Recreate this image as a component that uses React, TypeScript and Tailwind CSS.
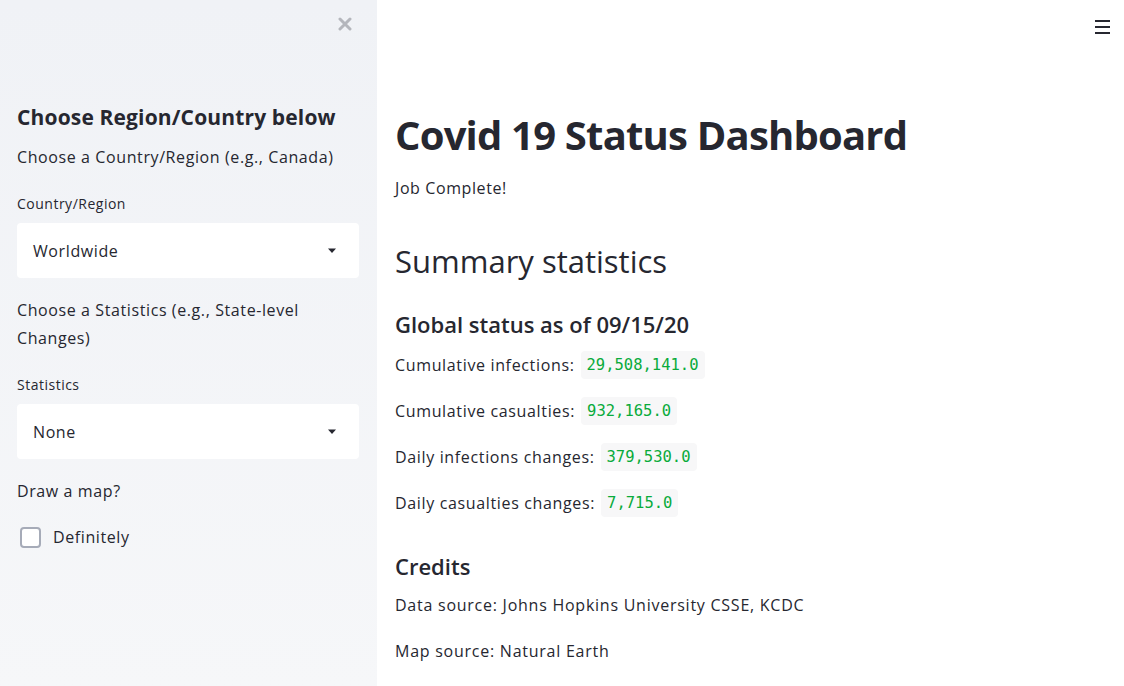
import React from "react";

const sans = { fontFamily: '"Open Sans", "Noto Sans", sans-serif' };

interface Stat {
  label: string;
  value: string;
}

const stats: Stat[] = [
  { label: "Cumulative infections:", value: "29,508,141.0" },
  { label: "Cumulative casualties:", value: "932,165.0" },
  { label: "Daily infections changes:", value: "379,530.0" },
  { label: "Daily casualties changes:", value: "7,715.0" },
];

function Caret() {
  return (
    <svg width="10" height="6" viewBox="0 0 10 6" className="mr-[2px]">
      <path d="M1 0.5h8L5 5z" fill="#262730" />
    </svg>
  );
}

function SelectBox({ value }: { value: string }) {
  return (
    <div className="flex items-center justify-between h-[55px] bg-white rounded-[4px] pl-4 pr-[20px]">
      <span className="text-[16px] tracking-[0.6px]">{value}</span>
      <Caret />
    </div>
  );
}

export default function App() {
  return (
    <div className="flex w-[1124px] h-[686px] overflow-hidden text-[#262730]" style={sans}>
      {/* Sidebar */}
      <aside className="w-[377px] shrink-0 h-full bg-gradient-to-b from-[#f0f2f6] to-[#f6f7f9] pl-[17px] pr-[18px]">
        <div className="h-[56px] flex justify-end items-start pt-[17px] pr-[7px]">
          <svg width="14" height="14" viewBox="0 0 14 14">
            <path d="M2 2L12 12M12 2L2 12" stroke="#b4b6bc" strokeWidth="3" strokeLinecap="round" />
          </svg>
        </div>
        <h3 className="mt-[46px] text-[21px] leading-[30px] font-bold tracking-[0.15px]">Choose Region/Country below</h3>
        <p className="mt-[11px] text-[16px] leading-[28px] tracking-[0.6px]">Choose a Country/Region (e.g., Canada)</p>
        <div className="mt-[23px] text-[14px] leading-[20px] tracking-[0.5px]">Country/Region</div>
        <div className="mt-[9px]">
          <SelectBox value="Worldwide" />
        </div>
        <p className="mt-[18px] text-[16px] leading-[28px] tracking-[0.6px]">Choose a Statistics (e.g., State-level Changes)</p>
        <div className="mt-[23px] text-[14px] leading-[20px] tracking-[0.5px]">Statistics</div>
        <div className="mt-[9px]">
          <SelectBox value="None" />
        </div>
        <p className="mt-[18px] text-[16px] leading-[28px] tracking-[0.6px]">Draw a map?</p>
        <label className="mt-[18px] flex items-center h-[28px]">
          <span className="ml-[3px] w-[21px] h-[21px] rounded-[4px] border-2 border-[#a6abb8] bg-white" />
          <span className="ml-[12px] text-[16px] tracking-[0.6px]">Definitely</span>
        </label>
      </aside>

      {/* Main */}
      <main className="relative flex-1 h-full bg-white pl-[18px]">
        <div className="absolute top-[20px] right-[14px] flex flex-col gap-[4.5px]">
          <span className="block w-[15px] h-[1.5px] bg-[#262730]" />
          <span className="block w-[15px] h-[1.5px] bg-[#262730]" />
          <span className="block w-[15px] h-[1.5px] bg-[#262730]" />
        </div>

        <h1 className="mt-[108px] text-[40px] leading-[54px] font-bold tracking-[-0.8px]">Covid 19 Status Dashboard</h1>
        <p className="mt-[14px] text-[16px] leading-[24px] tracking-[0.6px]">Job Complete!</p>
        <h2 className="mt-[40px] text-[31px] leading-[42px] font-normal">Summary statistics</h2>
        <h3 className="mt-[27px] text-[22px] leading-[30px] font-semibold">Global status as of 09/15/20</h3>
        <div className="mt-[12px] flex flex-col gap-[18px]">
          {stats.map((s) => (
            <div key={s.label} className="flex items-center h-[28px] text-[16px]">
              <span className="tracking-[0.65px]">{s.label}</span>
              <code
                className="ml-[6px] px-[6px] py-[1px] rounded-[4px] bg-[#f7f7f8] text-[#09ab3b] text-[15.5px] leading-[26px]"
                style={{ fontFamily: '"DejaVu Sans Mono", "Liberation Mono", monospace' }}
              >
                {s.value}
              </code>
            </div>
          ))}
        </div>
        <h3 className="mt-[34px] text-[22px] leading-[30px] font-semibold">Credits</h3>
        <p className="mt-[10px] text-[16px] leading-[28px] tracking-[0.75px]">Data source: Johns Hopkins University CSSE, KCDC</p>
        <p className="mt-[18px] text-[16px] leading-[28px] tracking-[0.75px]">Map source: Natural Earth</p>
      </main>
    </div>
  );
}
